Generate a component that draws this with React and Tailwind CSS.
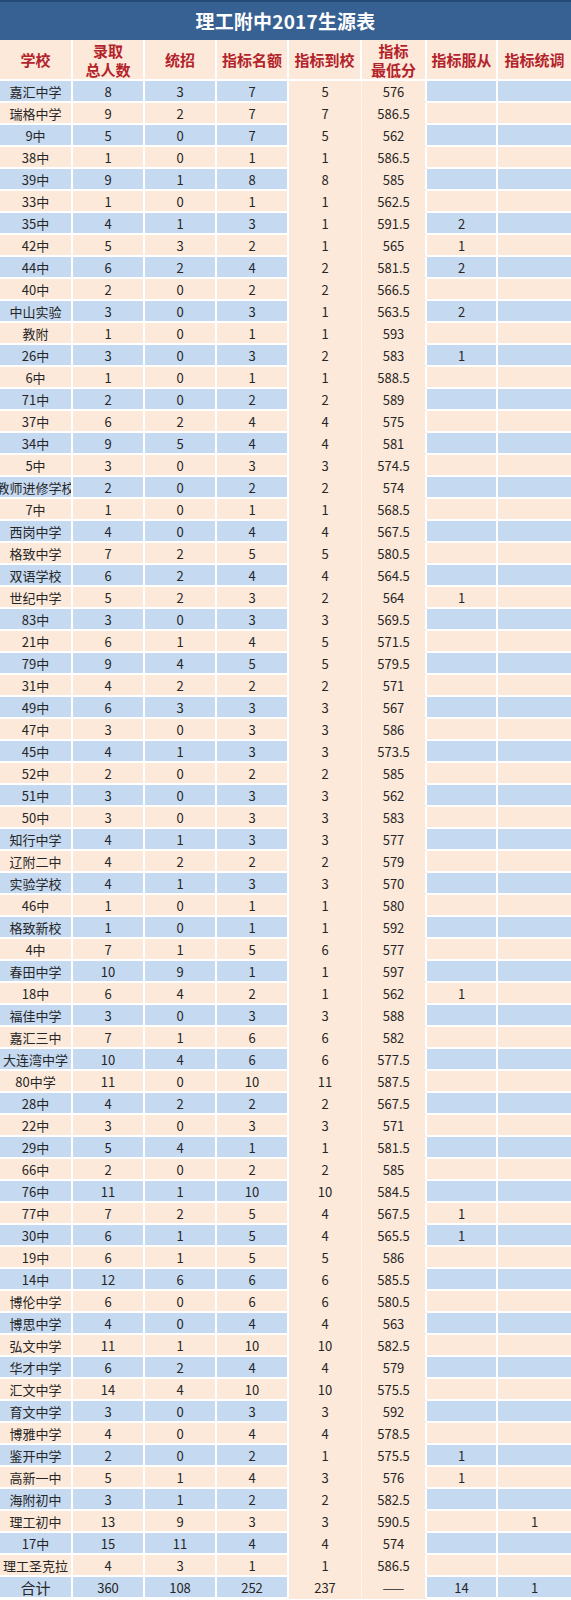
import React from "react";

const rows = [
  ["嘉汇中学", "8", "3", "7", "5", "576", "", ""],
  ["瑞格中学", "9", "2", "7", "7", "586.5", "", ""],
  ["9中", "5", "0", "7", "5", "562", "", ""],
  ["38中", "1", "0", "1", "1", "586.5", "", ""],
  ["39中", "9", "1", "8", "8", "585", "", ""],
  ["33中", "1", "0", "1", "1", "562.5", "", ""],
  ["35中", "4", "1", "3", "1", "591.5", "2", ""],
  ["42中", "5", "3", "2", "1", "565", "1", ""],
  ["44中", "6", "2", "4", "2", "581.5", "2", ""],
  ["40中", "2", "0", "2", "2", "566.5", "", ""],
  ["中山实验", "3", "0", "3", "1", "563.5", "2", ""],
  ["教附", "1", "0", "1", "1", "593", "", ""],
  ["26中", "3", "0", "3", "2", "583", "1", ""],
  ["6中", "1", "0", "1", "1", "588.5", "", ""],
  ["71中", "2", "0", "2", "2", "589", "", ""],
  ["37中", "6", "2", "4", "4", "575", "", ""],
  ["34中", "9", "5", "4", "4", "581", "", ""],
  ["5中", "3", "0", "3", "3", "574.5", "", ""],
  ["教师进修学校", "2", "0", "2", "2", "574", "", ""],
  ["7中", "1", "0", "1", "1", "568.5", "", ""],
  ["西岗中学", "4", "0", "4", "4", "567.5", "", ""],
  ["格致中学", "7", "2", "5", "5", "580.5", "", ""],
  ["双语学校", "6", "2", "4", "4", "564.5", "", ""],
  ["世纪中学", "5", "2", "3", "2", "564", "1", ""],
  ["83中", "3", "0", "3", "3", "569.5", "", ""],
  ["21中", "6", "1", "4", "5", "571.5", "", ""],
  ["79中", "9", "4", "5", "5", "579.5", "", ""],
  ["31中", "4", "2", "2", "2", "571", "", ""],
  ["49中", "6", "3", "3", "3", "567", "", ""],
  ["47中", "3", "0", "3", "3", "586", "", ""],
  ["45中", "4", "1", "3", "3", "573.5", "", ""],
  ["52中", "2", "0", "2", "2", "585", "", ""],
  ["51中", "3", "0", "3", "3", "562", "", ""],
  ["50中", "3", "0", "3", "3", "583", "", ""],
  ["知行中学", "4", "1", "3", "3", "577", "", ""],
  ["辽附二中", "4", "2", "2", "2", "579", "", ""],
  ["实验学校", "4", "1", "3", "3", "570", "", ""],
  ["46中", "1", "0", "1", "1", "580", "", ""],
  ["格致新校", "1", "0", "1", "1", "592", "", ""],
  ["4中", "7", "1", "5", "6", "577", "", ""],
  ["春田中学", "10", "9", "1", "1", "597", "", ""],
  ["18中", "6", "4", "2", "1", "562", "1", ""],
  ["福佳中学", "3", "0", "3", "3", "588", "", ""],
  ["嘉汇三中", "7", "1", "6", "6", "582", "", ""],
  ["大连湾中学", "10", "4", "6", "6", "577.5", "", ""],
  ["80中学", "11", "0", "10", "11", "587.5", "", ""],
  ["28中", "4", "2", "2", "2", "567.5", "", ""],
  ["22中", "3", "0", "3", "3", "571", "", ""],
  ["29中", "5", "4", "1", "1", "581.5", "", ""],
  ["66中", "2", "0", "2", "2", "585", "", ""],
  ["76中", "11", "1", "10", "10", "584.5", "", ""],
  ["77中", "7", "2", "5", "4", "567.5", "1", ""],
  ["30中", "6", "1", "5", "4", "565.5", "1", ""],
  ["19中", "6", "1", "5", "5", "586", "", ""],
  ["14中", "12", "6", "6", "6", "585.5", "", ""],
  ["博伦中学", "6", "0", "6", "6", "580.5", "", ""],
  ["博思中学", "4", "0", "4", "4", "563", "", ""],
  ["弘文中学", "11", "1", "10", "10", "582.5", "", ""],
  ["华才中学", "6", "2", "4", "4", "579", "", ""],
  ["汇文中学", "14", "4", "10", "10", "575.5", "", ""],
  ["育文中学", "3", "0", "3", "3", "592", "", ""],
  ["博雅中学", "4", "0", "4", "4", "578.5", "", ""],
  ["鉴开中学", "2", "0", "2", "1", "575.5", "1", ""],
  ["高新一中", "5", "1", "4", "3", "576", "1", ""],
  ["海附初中", "3", "1", "2", "2", "582.5", "", ""],
  ["理工初中", "13", "9", "3", "3", "590.5", "", "1"],
  ["17中", "15", "11", "4", "4", "574", "", ""],
  ["理工圣克拉", "4", "3", "1", "1", "586.5", "", ""],
];

const headers = [
  ["学校"],
  ["录取", "总人数"],
  ["统招"],
  ["指标名额"],
  ["指标到校"],
  ["指标", "最低分"],
  ["指标服从"],
  ["指标统调"],
];

const COLS = "grid grid-cols-[73px_72px_72px_72px_73px_65px_71px_73px]";
const FONT = { fontFamily: '"Noto Sans CJK SC", "Noto Sans", sans-serif' };

function cellClass(ci, odd) {
  if (ci === 4) {
    return "bg-[#fde9d9] border-b-2 border-b-[#fde9d9] border-r border-r-[#fff5ee]";
  }
  if (ci === 5) {
    return "bg-[#fde9d9] border-b-2 border-b-[#fde9d9] border-r-2 border-r-white";
  }
  const bg = odd ? "bg-[#c5d9f1]" : "bg-[#fde9d9]";
  const br = ci === 7 ? "" : "border-r-2 border-r-white";
  return `${bg} border-b-2 border-b-white ${br}`;
}

function Row({ cells, odd, total }) {
  return (
    <div className={`${COLS} h-[22px]`}>
      {cells.map((c, ci) => (
        <div
          key={ci}
          className={`${cellClass(ci, odd)} flex items-center justify-center overflow-hidden whitespace-nowrap text-[#262626] ${
            total && ci === 0 ? "text-[15px]" : "text-[13px]"
          } leading-none`}
        >
          {c}
        </div>
      ))}
    </div>
  );
}

export default function App() {
  return (
    <div className="w-[571px] bg-white overflow-hidden" style={FONT}>
      <div className="h-[40px] bg-[#376193] border-t-2 border-t-[#244a78] flex items-center justify-center">
        <span className="text-white font-bold text-[19px] tracking-[0.2px]">
          理工附中2017生源表
        </span>
      </div>
      <div className={`${COLS} h-[41px]`}>
        {headers.map((h, i) => (
          <div
            key={i}
            className={`bg-[#fde9d9] border-b-2 border-b-white ${
              i === 7 ? "" : "border-r-2 border-r-white"
            } flex flex-col items-center justify-center text-[#b3232b] font-bold text-[15px] leading-[19px] whitespace-nowrap overflow-hidden`}
          >
            {h.map((t, k) => (
              <span key={k}>{t}</span>
            ))}
          </div>
        ))}
      </div>
      {rows.map((r, i) => (
        <Row key={i} cells={r} odd={i % 2 === 0} />
      ))}
      <Row cells={["合计", "360", "108", "252", "237", "——", "14", "1"]} odd total />
    </div>
  );
}
